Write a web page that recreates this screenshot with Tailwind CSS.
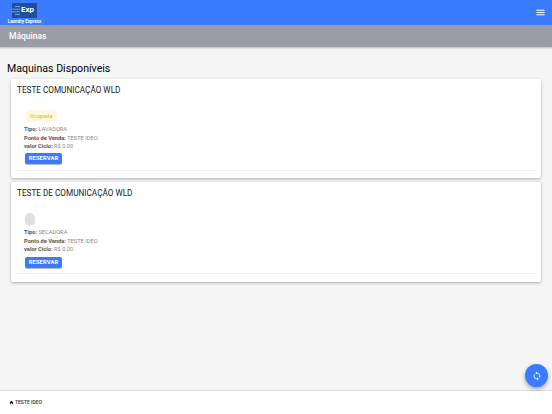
<!DOCTYPE html>
<html lang="pt-BR">
<head>
    <meta charset="UTF-8">
    <title>Máquinas</title>
    <script src="https://cdn.jsdelivr.net/npm/@tailwindcss/browser@4"></script>
</head>
<body class="font-['Roboto',sans-serif]">
    <div class="relative flex flex-col h-[414px] w-[552px] overflow-hidden bg-[#f5f5f5]">
        <!-- top bar -->
        <header class="flex items-center justify-between h-[25px] pl-[8px] pr-[7px] bg-[#3b7cff]">
            <div class="flex flex-col items-center w-[33px]">
                <div class="flex items-center h-[15px] w-[25px] mt-[2px] bg-[#1c4f9c]">
                    <svg class="w-[8px] h-[11px] shrink-0" viewBox="0 0 8 11" fill="none" stroke="#6f9fe8" stroke-width="1"><path d="M3 1.5h5M0 4.2h8M0 6.8h8M3 9.5h5"/></svg>
                    <span class="text-[8px] leading-none font-bold text-white ml-[1px]">Exp</span>
                </div>
                <span class="text-[4.5px] leading-[6px] mt-[1px] font-bold text-white whitespace-nowrap">Laundry Express</span>
            </div>
            <svg class="w-[11px] h-[11px] mr-[-1px]" viewBox="0 0 24 24" fill="white"><path d="M3 18h18v-2H3v2zm0-5h18v-2H3v2zm0-7v2h18V6H3z"/></svg>
        </header>

        <!-- page title -->
        <div class="flex items-center h-[22px] px-[9px] bg-[#9a9da3] shadow-[0_1px_2px_rgba(0,0,0,0.25)]">
            <h1 class="text-[8.5px] font-medium text-white">Máquinas</h1>
        </div>

        <main class="flex-1 pt-[15px]">
            <h2 class="pl-[7px] text-[10.6px] leading-[14px] font-normal text-black">Maquinas Disponíveis</h2>

            <section class="mx-[11px] mt-[3px] h-[99px] px-[6px] pt-[7px] bg-white rounded-[2px] shadow-[0_1px_3px_rgba(0,0,0,0.3)]">
                <h3 class="text-[8.2px] leading-[9px] font-normal text-[#212121]">TESTE COMUNICAÇÃO WLD</h3>
                <div class="px-[7px] pt-[15px] pb-[6px] border-b border-[#eeeeee]">
                    <span class="block w-fit ml-[1px] px-[5px] h-[12px] leading-[12px] rounded-[6px] bg-[#fff8e1] text-[#e8c33a] text-[5.7px] font-medium">Ocupada</span>
                    <div class="mt-[3px] text-[5.7px] leading-[8.5px] text-[#8a8a8a]">
                        <p><b class="font-bold text-[#555555]">Tipo:</b> LAVADORA</p>
                        <p><b class="font-bold text-[#555555]">Ponto de Venda:</b> TESTE IDEO</p>
                        <p><b class="font-bold text-[#555555]">valor Ciclo:</b> R$ 0.00</p>
                    </div>
                    <button class="mt-[2.5px] ml-[1px] block h-[11px] w-[37px] rounded-[2px] bg-[#3b7cff] text-white text-[5.7px] font-bold tracking-[0.2px] shadow-[0_1px_1px_rgba(0,0,0,0.3)]">RESERVAR</button>
                </div>
            </section>

            <section class="mx-[11px] mt-[4px] h-[100px] px-[6px] pt-[7px] bg-white rounded-[2px] shadow-[0_1px_3px_rgba(0,0,0,0.3)]">
                <h3 class="text-[8.2px] leading-[9px] font-normal text-[#212121]">TESTE DE COMUNICAÇÃO WLD</h3>
                <div class="px-[7px] pt-[15px] pb-[5.5px] border-b border-[#eeeeee]">
                    <span class="block ml-[1px] w-[10px] h-[13px] rounded-[5px] bg-[#e0e0e0]"></span>
                    <div class="mt-[2px] text-[5.7px] leading-[8.5px] text-[#8a8a8a]">
                        <p><b class="font-bold text-[#555555]">Tipo:</b> SECADORA</p>
                        <p><b class="font-bold text-[#555555]">Ponto de Venda:</b> TESTE IDEO</p>
                        <p><b class="font-bold text-[#555555]">valor Ciclo:</b> R$ 0.00</p>
                    </div>
                    <button class="mt-[3px] ml-[1px] block h-[11px] w-[37px] rounded-[2px] bg-[#3b7cff] text-white text-[5.7px] font-bold tracking-[0.2px] shadow-[0_1px_1px_rgba(0,0,0,0.3)]">RESERVAR</button>
                </div>
            </section>
        </main>

        <footer class="flex items-center gap-[1px] h-[24px] pl-[9px] bg-white border-t border-[#dddddd]">
            <svg class="w-[5px] h-[5px]" viewBox="0 0 24 24" fill="#212121"><path d="M10 20v-6h4v6h5v-8h3L12 3 2 12h3v8z"/></svg>
            <span class="text-[5px] font-medium text-[#333333]">TESTE IDEO</span>
        </footer>

        <!-- refresh fab -->
        <button class="absolute left-[525px] top-[364px] flex items-center justify-center w-[23px] h-[23px] rounded-full bg-[#3b7cff] shadow-[0_2px_4px_rgba(0,0,0,0.35)]">
            <svg class="w-[10px] h-[10px]" viewBox="0 0 24 24" fill="white"><path d="M12 4V1L8 5l4 4V6c3.31 0 6 2.69 6 6 0 1.01-.25 1.97-.7 2.8l1.46 1.46C19.54 15.03 20 13.57 20 12c0-4.42-3.58-8-8-8zm0 14c-3.31 0-6-2.69-6-6 0-1.01.25-1.97.7-2.8L5.24 7.74C4.46 8.97 4 10.43 4 12c0 4.42 3.58 8 8 8v3l4-4-4-4v3z"/></svg>
        </button>
    </div>
</body>
</html>
